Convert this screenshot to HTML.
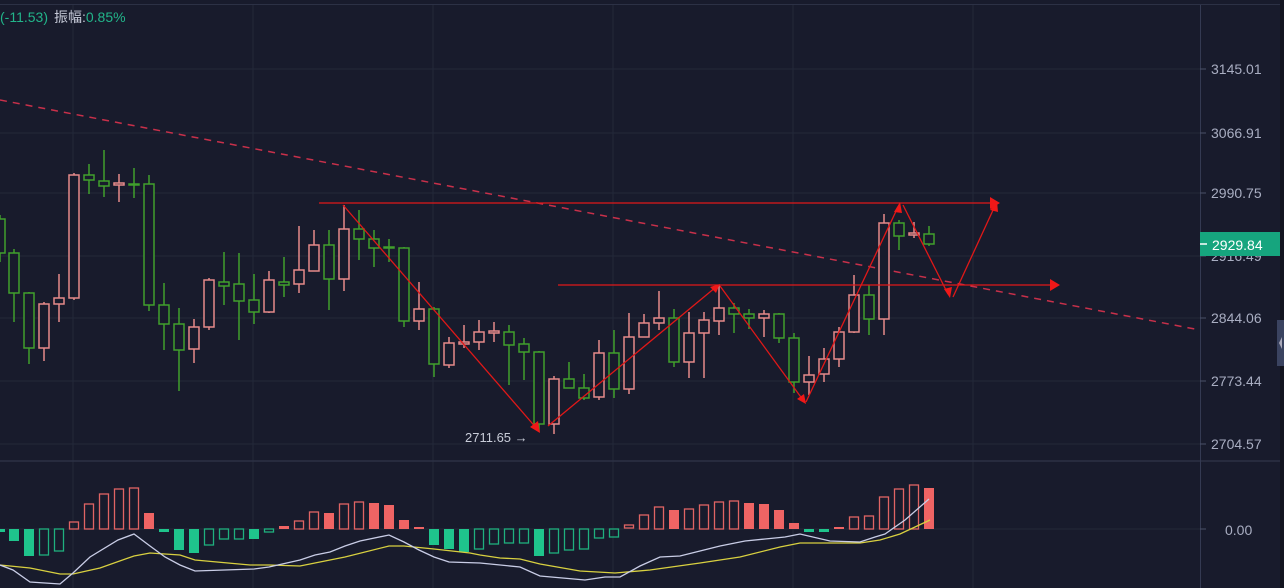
<!DOCTYPE html>
<html><head><meta charset="utf-8"><style>
html,body{margin:0;padding:0;background:#181b2c;}
svg{display:block}
text{font-family:"Liberation Sans","Noto Sans CJK SC",sans-serif;}
</style></head><body>
<svg width="1284" height="588" viewBox="0 0 1284 588" xmlns="http://www.w3.org/2000/svg">
<rect width="1284" height="588" fill="#181b2c"/>
<rect x="1280" y="0" width="4" height="588" fill="#12141f"/>
<line x1="0" y1="4.5" x2="1280" y2="4.5" stroke="#2c3145" stroke-width="1"/>
<!-- grid -->
<g stroke="#232839" stroke-width="1">
<line x1="0" y1="69" x2="1200" y2="69"/><line x1="0" y1="133" x2="1200" y2="133"/><line x1="0" y1="193" x2="1200" y2="193"/><line x1="0" y1="256" x2="1200" y2="256"/><line x1="0" y1="318" x2="1200" y2="318"/><line x1="0" y1="381" x2="1200" y2="381"/><line x1="0" y1="444" x2="1200" y2="444"/>
<line x1="0" y1="529" x2="1200" y2="529"/>
<line x1="73" y1="5" x2="73" y2="588"/><line x1="253" y1="5" x2="253" y2="588"/><line x1="433" y1="5" x2="433" y2="588"/><line x1="613" y1="5" x2="613" y2="588"/><line x1="793" y1="5" x2="793" y2="588"/><line x1="973" y1="5" x2="973" y2="588"/>
</g>
<line x1="0" y1="461" x2="1280" y2="461" stroke="#2c3145" stroke-width="1.5"/>
<line x1="1200.5" y1="5" x2="1200.5" y2="588" stroke="#343a52" stroke-width="1"/>
<g stroke="#4a5068" stroke-width="1"><line x1="1200" y1="69" x2="1206" y2="69"/><line x1="1200" y1="133" x2="1206" y2="133"/><line x1="1200" y1="193" x2="1206" y2="193"/><line x1="1200" y1="256" x2="1206" y2="256"/><line x1="1200" y1="318" x2="1206" y2="318"/><line x1="1200" y1="381" x2="1206" y2="381"/><line x1="1200" y1="444" x2="1206" y2="444"/><line x1="1200" y1="529" x2="1206" y2="529"/></g>
<!-- axis labels -->
<g fill="#a9aec2" font-size="14">
<text x="1211" y="74">3145.01</text><text x="1211" y="138">3066.91</text><text x="1211" y="198">2990.75</text><text x="1211" y="261">2916.49</text><text x="1211" y="323">2844.06</text><text x="1211" y="386">2773.44</text><text x="1211" y="449">2704.57</text><text x="1225" y="535">0.00</text>
</g>
<rect x="1200" y="232" width="80" height="24" fill="#16a57e"/>
<line x1="1200" y1="244" x2="1207" y2="244" stroke="#fff" stroke-width="1.5"/>
<text x="1212" y="250" fill="#fff" font-size="14">2929.84</text>
<rect x="1277" y="320" width="7" height="46" fill="#3a4360"/>
<polygon points="1282,337 1279,343 1282,349" fill="#aab"/>
<!-- header -->
<text x="0" y="22" font-size="14"><tspan fill="#22b58a">(-11.53)</tspan><tspan fill="#c6cad8" dx="6">振幅:</tspan><tspan fill="#22b58a">0.85%</tspan></text>
<!-- trend dashed -->
<line x1="0" y1="100" x2="1200" y2="330" stroke="#c8304a" stroke-width="1.5" stroke-dasharray="7,6"/>
<!-- candles green -->
<g stroke="#40a02c" stroke-width="1.5" fill="#181b2c">
<line x1="0" y1="215" x2="0" y2="262"/><rect x="-5" y="219" width="10" height="34"/>
<line x1="14" y1="249" x2="14" y2="322"/><rect x="9" y="253" width="10" height="40"/>
<line x1="29" y1="292" x2="29" y2="364"/><rect x="24" y="293" width="10" height="55"/>
<line x1="89" y1="164" x2="89" y2="194"/><rect x="84" y="175" width="10" height="5"/>
<line x1="104" y1="150" x2="104" y2="197"/><rect x="99" y="181" width="10" height="5"/>
<line x1="134" y1="168" x2="134" y2="198"/><rect x="129" y="184" width="10" height="1"/>
<line x1="149" y1="175" x2="149" y2="311"/><rect x="144" y="184" width="10" height="121"/>
<line x1="164" y1="283" x2="164" y2="350"/><rect x="159" y="305" width="10" height="19"/>
<line x1="179" y1="308" x2="179" y2="391"/><rect x="174" y="324" width="10" height="26"/>
<line x1="224" y1="252" x2="224" y2="305"/><rect x="219" y="282" width="10" height="4"/>
<line x1="239" y1="253" x2="239" y2="340"/><rect x="234" y="284" width="10" height="17"/>
<line x1="254" y1="274" x2="254" y2="324"/><rect x="249" y="300" width="10" height="12"/>
<line x1="284" y1="257" x2="284" y2="297"/><rect x="279" y="282" width="10" height="3"/>
<line x1="329" y1="230" x2="329" y2="310"/><rect x="324" y="245" width="10" height="34"/>
<line x1="359" y1="210" x2="359" y2="260"/><rect x="354" y="229" width="10" height="10"/>
<line x1="374" y1="230" x2="374" y2="267"/><rect x="369" y="239" width="10" height="9"/>
<line x1="389" y1="239" x2="389" y2="262"/><rect x="384" y="247" width="10" height="1"/>
<line x1="404" y1="247" x2="404" y2="327"/><rect x="399" y="248" width="10" height="73"/>
<line x1="434" y1="307" x2="434" y2="377"/><rect x="429" y="309" width="10" height="55"/>
<line x1="509" y1="325" x2="509" y2="385"/><rect x="504" y="332" width="10" height="13"/>
<line x1="524" y1="338" x2="524" y2="380"/><rect x="519" y="344" width="10" height="8"/>
<line x1="539" y1="351" x2="539" y2="432"/><rect x="534" y="352" width="10" height="72"/>
<line x1="569" y1="362" x2="569" y2="388"/><rect x="564" y="379" width="10" height="9"/>
<line x1="584" y1="374" x2="584" y2="400"/><rect x="579" y="388" width="10" height="10"/>
<line x1="614" y1="330" x2="614" y2="398"/><rect x="609" y="353" width="10" height="36"/>
<line x1="674" y1="309" x2="674" y2="367"/><rect x="669" y="318" width="10" height="44"/>
<line x1="734" y1="303" x2="734" y2="333"/><rect x="729" y="308" width="10" height="6"/>
<line x1="749" y1="309" x2="749" y2="329"/><rect x="744" y="314" width="10" height="4"/>
<line x1="779" y1="313" x2="779" y2="343"/><rect x="774" y="314" width="10" height="24"/>
<line x1="794" y1="333" x2="794" y2="393"/><rect x="789" y="338" width="10" height="44"/>
<line x1="869" y1="285" x2="869" y2="335"/><rect x="864" y="295" width="10" height="24"/>
<line x1="899" y1="220" x2="899" y2="250"/><rect x="894" y="223" width="10" height="13"/>
<line x1="929" y1="226" x2="929" y2="246"/><rect x="924" y="234" width="10" height="10"/>
</g>
<!-- candles red -->
<g stroke="#e68a8a" stroke-width="1.5" fill="#181b2c">
<line x1="44" y1="302" x2="44" y2="361"/><rect x="39" y="304" width="10" height="44"/>
<line x1="59" y1="274" x2="59" y2="322"/><rect x="54" y="298" width="10" height="6"/>
<line x1="74" y1="173" x2="74" y2="300"/><rect x="69" y="175" width="10" height="123"/>
<line x1="119" y1="174" x2="119" y2="202"/><rect x="114" y="183" width="10" height="2"/>
<line x1="194" y1="319" x2="194" y2="363"/><rect x="189" y="327" width="10" height="22"/>
<line x1="209" y1="278" x2="209" y2="330"/><rect x="204" y="280" width="10" height="47"/>
<line x1="269" y1="271" x2="269" y2="313"/><rect x="264" y="280" width="10" height="32"/>
<line x1="299" y1="226" x2="299" y2="293"/><rect x="294" y="270" width="10" height="14"/>
<line x1="314" y1="230" x2="314" y2="271"/><rect x="309" y="245" width="10" height="26"/>
<line x1="344" y1="205" x2="344" y2="291"/><rect x="339" y="229" width="10" height="50"/>
<line x1="419" y1="282" x2="419" y2="330"/><rect x="414" y="309" width="10" height="12"/>
<line x1="449" y1="337" x2="449" y2="368"/><rect x="444" y="343" width="10" height="22"/>
<line x1="464" y1="325" x2="464" y2="348"/><rect x="459" y="342" width="10" height="2"/>
<line x1="479" y1="320" x2="479" y2="350"/><rect x="474" y="332" width="10" height="10"/>
<line x1="494" y1="322" x2="494" y2="342"/><rect x="489" y="331" width="10" height="2"/>
<line x1="554" y1="376" x2="554" y2="434"/><rect x="549" y="379" width="10" height="45"/>
<line x1="599" y1="340" x2="599" y2="400"/><rect x="594" y="353" width="10" height="44"/>
<line x1="629" y1="313" x2="629" y2="394"/><rect x="624" y="337" width="10" height="52"/>
<line x1="644" y1="314" x2="644" y2="330"/><rect x="639" y="323" width="10" height="14"/>
<line x1="659" y1="291" x2="659" y2="330"/><rect x="654" y="318" width="10" height="5"/>
<line x1="689" y1="312" x2="689" y2="378"/><rect x="684" y="333" width="10" height="29"/>
<line x1="704" y1="312" x2="704" y2="378"/><rect x="699" y="320" width="10" height="13"/>
<line x1="719" y1="285" x2="719" y2="335"/><rect x="714" y="308" width="10" height="13"/>
<line x1="764" y1="310" x2="764" y2="337"/><rect x="759" y="314" width="10" height="4"/>
<line x1="809" y1="356" x2="809" y2="395"/><rect x="804" y="375" width="10" height="7"/>
<line x1="824" y1="348" x2="824" y2="382"/><rect x="819" y="359" width="10" height="15"/>
<line x1="839" y1="327" x2="839" y2="367"/><rect x="834" y="332" width="10" height="27"/>
<line x1="854" y1="275" x2="854" y2="333"/><rect x="849" y="295" width="10" height="37"/>
<line x1="884" y1="214" x2="884" y2="335"/><rect x="879" y="223" width="10" height="96"/>
<line x1="914" y1="222" x2="914" y2="238"/><rect x="909" y="233" width="10" height="2"/>
</g>
<!-- red drawing lines -->
<g stroke="#e01818" stroke-width="1.3" fill="none">
<line x1="319" y1="203" x2="994" y2="203"/>
<line x1="558" y1="285" x2="1054" y2="285"/>
<polyline points="343,205 538,430"/>
<polyline points="548,426 716,287"/>
<polyline points="720,286 803,400"/>
<polyline points="806,402 898,207"/>
<polyline points="903,205 948,294"/>
<polyline points="953,297 994,208"/>
</g>
<g fill="#f01818">
<polygon points="1000,203 990,197 990,209"/>
<polygon points="1060,285 1050,279 1050,291"/>
<polygon points="540,433 530,427 538,421"/>
<polygon points="720,284 710,287 716,293"/>
<polygon points="806,404 797,399 804,394"/>
<polygon points="900,202 894,212 902,213"/>
<polygon points="950,298 944,289 952,287"/>
<polygon points="997,201 990,210 998,212"/>
</g>
<text x="465" y="442" fill="#c8ccd8" font-size="13">2711.65 →</text>
<!-- MACD bars green -->
<g>
<g fill="#1fc48c">
<rect x="-5" y="529" width="10" height="3"/><rect x="9" y="529" width="10" height="12"/><rect x="24" y="529" width="10" height="27"/>
<rect x="159" y="529" width="10" height="3"/><rect x="174" y="529" width="10" height="21"/><rect x="189" y="529" width="10" height="24"/><rect x="249" y="529" width="10" height="10"/>
<rect x="429" y="529" width="10" height="16"/><rect x="444" y="529" width="10" height="20"/><rect x="459" y="529" width="10" height="23"/><rect x="534" y="529" width="10" height="27"/>
<rect x="804" y="529" width="10" height="3"/><rect x="819" y="529" width="10" height="3"/>
</g>
<g fill="none" stroke="#1fb07e" stroke-width="1.3">
<rect x="39.5" y="529" width="9" height="26"/><rect x="54.5" y="529" width="9" height="22"/>
<rect x="204.5" y="529" width="9" height="16"/><rect x="219.5" y="529" width="9" height="10"/><rect x="234.5" y="529" width="9" height="10"/><rect x="264.5" y="529" width="9" height="3"/>
<rect x="474.5" y="529" width="9" height="20"/><rect x="489.5" y="529" width="9" height="15"/><rect x="504.5" y="529" width="9" height="14"/><rect x="519.5" y="529" width="9" height="14"/>
<rect x="549.5" y="529" width="9" height="24"/><rect x="564.5" y="529" width="9" height="21"/><rect x="579.5" y="529" width="9" height="20"/><rect x="594.5" y="529" width="9" height="9"/><rect x="609.5" y="529" width="9" height="8"/>
</g>
<g fill="#ef6464">
<rect x="144" y="513" width="10" height="16"/><rect x="279" y="526" width="10" height="3"/><rect x="324" y="513" width="10" height="16"/><rect x="369" y="503" width="10" height="26"/><rect x="384" y="505" width="10" height="24"/><rect x="399" y="520" width="10" height="9"/><rect x="414" y="527" width="10" height="2"/>
<rect x="669" y="510" width="10" height="19"/><rect x="744" y="503" width="10" height="26"/><rect x="759" y="504" width="10" height="25"/><rect x="774" y="510" width="10" height="19"/><rect x="789" y="523" width="10" height="6"/><rect x="834" y="527" width="10" height="2"/><rect x="924" y="488" width="10" height="41"/>
</g>
<g fill="none" stroke="#e06464" stroke-width="1.3">
<rect x="69.5" y="522" width="9" height="7"/><rect x="84.5" y="504" width="9" height="25"/><rect x="99.5" y="494" width="9" height="35"/><rect x="114.5" y="489" width="9" height="40"/><rect x="129.5" y="488" width="9" height="41"/>
<rect x="294.5" y="521" width="9" height="8"/><rect x="309.5" y="512" width="9" height="17"/><rect x="339.5" y="504" width="9" height="25"/><rect x="354.5" y="502" width="9" height="27"/>
<rect x="624.5" y="525" width="9" height="3"/><rect x="639.5" y="515" width="9" height="14"/><rect x="654.5" y="507" width="9" height="22"/><rect x="684.5" y="509" width="9" height="20"/><rect x="699.5" y="505" width="9" height="24"/><rect x="714.5" y="502" width="9" height="27"/><rect x="729.5" y="501" width="9" height="28"/>
<rect x="849.5" y="517" width="9" height="12"/><rect x="864.5" y="516" width="9" height="13"/><rect x="879.5" y="497" width="9" height="32"/><rect x="894.5" y="489" width="9" height="40"/><rect x="909.5" y="485" width="9" height="44"/>
</g>
</g>
<!-- DEA -->
<polyline fill="none" stroke="#d8d040" stroke-width="1.3" points="0,565 30,568 60,574 73,574 100,568 134,556 150,553 180,555 195,560 250,565 269,565 300,566 345,557 389,546 404,546 434,549 470,553 480,555 500,558 520,559 540,564 580,571 615,573 650,570 700,563 740,557 780,547 800,543 830,543 860,543 880,540 900,534 930,520"/>
<!-- DIF -->
<polyline fill="none" stroke="#c9cde6" stroke-width="1.3" points="0,565 13,570 30,582 60,584 73,573 90,557 118,540 134,534 150,546 165,557 180,565 195,571 254,569 269,567 300,560 315,555 330,552 345,546 360,541 389,535 404,542 419,550 434,557 449,562 480,563 520,567 540,576 585,580 605,577 620,577 640,566 660,557 680,556 700,551 720,546 745,541 765,539 785,537 800,534 830,541 860,542 875,537 885,534 905,520 929,499"/>
</svg>
</body></html>
